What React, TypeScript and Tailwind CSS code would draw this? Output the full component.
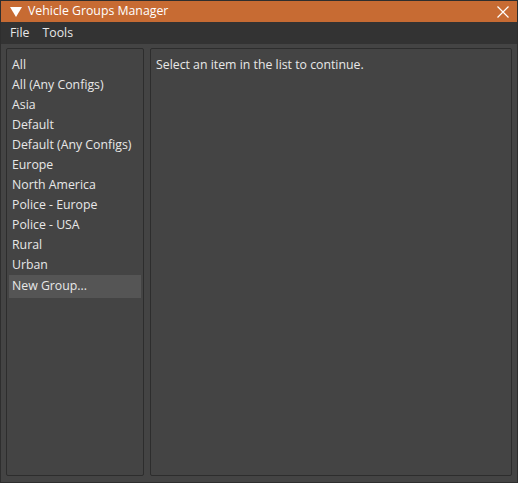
const groups = [
  'All',
  'All (Any Configs)',
  'Asia',
  'Default',
  'Default (Any Configs)',
  'Europe',
  'North America',
  'Police - Europe',
  'Police - USA',
  'Rural',
  'Urban',
];

export default function App() {
  return (
    <div
      className="w-[518px] h-[483px] flex flex-col bg-[#444444] border border-[#2e2e2e] text-[12.3px] text-[#e8e8e8]"
      style={{ fontFamily: '"Open Sans", "Noto Sans", sans-serif' }}
    >
      <div className="h-[21px] shrink-0 flex items-center bg-[#c76b33] pl-[9px] pr-[8px] text-white">
        <svg width="12" height="10" viewBox="0 0 12 10" className="mr-[6px]">
          <path d="M0 0 H12 L6 10 Z" fill="white" />
        </svg>
        <span className="flex-1 leading-none">Vehicle Groups Manager</span>
        <svg width="12" height="12" viewBox="0 0 12 12">
          <path d="M0.5 0.5 L11.5 11.5 M11.5 0.5 L0.5 11.5" stroke="white" strokeWidth="1.2" />
        </svg>
      </div>
      <div className="h-[22px] shrink-0 flex items-center gap-[13px] bg-[#333333] px-[9px]">
        <span>File</span>
        <span>Tools</span>
      </div>
      <div className="flex-1 flex gap-[6px] px-[5px] pt-[4px] pb-[6px]">
        <div className="w-[138px] flex flex-col border border-[#2d2d2d] rounded-[2px] pt-[6px] px-[2px]">
          {groups.map((g) => (
            <div key={g} className="h-[20px] flex items-center px-[3px] whitespace-nowrap">
              {g}
            </div>
          ))}
          <div className="h-[23px] flex items-center px-[3px] bg-[#555555]">New Group...</div>
        </div>
        <div className="flex-1 border border-[#2d2d2d] rounded-[2px] px-[5px] pt-[7px]">
          Select an item in the list to continue.
        </div>
      </div>
    </div>
  );
}
